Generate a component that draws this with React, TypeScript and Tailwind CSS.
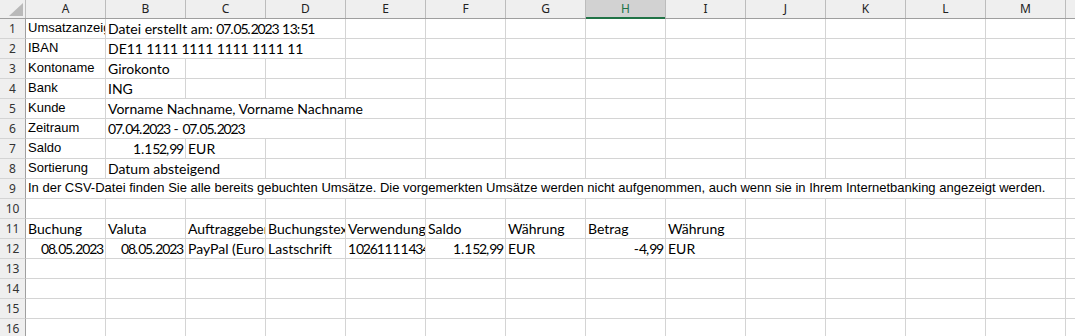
import React from "react";

type Cell = {
  c: number; // start column index 0..12
  span?: number;
  text: string;
  right?: boolean;
  font?: "arial" | "cal";
};

const W: Record<number, string> = {
  1: "w-[80px]",
  2: "w-[160px]",
  3: "w-[240px]",
  4: "w-[320px]",
  13: "w-[1040px]",
};

const cols = ["A", "B", "C", "D", "E", "F", "G", "H", "I", "J", "K", "L", "M"];

const rows: Cell[][] = [
  [
    { c: 0, text: "Umsatzanzeige", font: "arial" },
    { c: 1, span: 3, text: "Datei erstellt am: 07.05.2023 13:51", font: "cal" },
  ],
  [
    { c: 0, text: "IBAN", font: "arial" },
    { c: 1, span: 3, text: "DE11 1111 1111 1111 1111 11", font: "cal" },
  ],
  [
    { c: 0, text: "Kontoname", font: "arial" },
    { c: 1, text: "Girokonto", font: "cal" },
  ],
  [
    { c: 0, text: "Bank", font: "arial" },
    { c: 1, text: "ING", font: "cal" },
  ],
  [
    { c: 0, text: "Kunde", font: "arial" },
    { c: 1, span: 4, text: "Vorname Nachname, Vorname Nachname", font: "cal" },
  ],
  [
    { c: 0, text: "Zeitraum", font: "arial" },
    { c: 1, span: 3, text: "07.04.2023 - 07.05.2023", font: "cal" },
  ],
  [
    { c: 0, text: "Saldo", font: "arial" },
    { c: 1, text: "1.152,99", right: true, font: "cal" },
    { c: 2, text: "EUR", font: "cal" },
  ],
  [
    { c: 0, text: "Sortierung", font: "arial" },
    { c: 1, span: 2, text: "Datum absteigend", font: "cal" },
  ],
  [
    {
      c: 0,
      span: 13,
      text:
        "In der CSV-Datei finden Sie alle bereits gebuchten Umsätze. Die vorgemerkten Umsätze werden nicht aufgenommen, auch wenn sie in Ihrem Internetbanking angezeigt werden.",
      font: "arial",
    },
  ],
  [],
  [
    { c: 0, text: "Buchung", font: "cal" },
    { c: 1, text: "Valuta", font: "cal" },
    { c: 2, text: "Auftraggeber/Empfänger", font: "cal" },
    { c: 3, text: "Buchungstext", font: "cal" },
    { c: 4, text: "Verwendungszweck", font: "cal" },
    { c: 5, text: "Saldo", font: "cal" },
    { c: 6, text: "Währung", font: "cal" },
    { c: 7, text: "Betrag", font: "cal" },
    { c: 8, text: "Währung", font: "cal" },
  ],
  [
    { c: 0, text: "08.05.2023", right: true, font: "cal" },
    { c: 1, text: "08.05.2023", right: true, font: "cal" },
    { c: 2, text: "PayPal (Europe) S.a.r.l. et Cie., S.C.A.", font: "cal" },
    { c: 3, text: "Lastschrift", font: "cal" },
    { c: 4, text: "1026111143456 PP.1111.PP", font: "cal" },
    { c: 5, text: "1.152,99", right: true, font: "cal" },
    { c: 6, text: "EUR", font: "cal" },
    { c: 7, text: "-4,99", right: true, font: "cal" },
    { c: 8, text: "EUR", font: "cal" },
  ],
  [],
  [],
  [],
  [],
];

function CalText({ text }: { text: string }) {
  const parts = text.split(/([02-9]+|1+)/);
  return (
    <span>
      {parts.map((p, i) =>
        /^1+$/.test(p) ? (
          <span key={i} className="tracking-[-0.2px]">
            {p}
          </span>
        ) : /^[02-9]+$/.test(p) ? (
          <span key={i} className="tracking-[-1.2px]">
            {p}
          </span>
        ) : (
          <span key={i}>{p}</span>
        )
      )}
    </span>
  );
}

function buildRow(cells: Cell[]) {
  const out: React.ReactNode[] = [];
  let col = 0;
  const sorted = [...cells].sort((a, b) => a.c - b.c);
  let idx = 0;
  while (col < 13) {
    const cell = sorted[idx];
    if (cell && cell.c === col) {
      const span = cell.span ?? 1;
      const isArial = cell.font === "arial";
      const fontCls = isArial
        ? "font-['Liberation_Sans',Arial,sans-serif] text-[13px] pb-[2px]"
        : "font-['Lato',sans-serif] text-[14px] pb-[1px]";
      out.push(
        <div
          key={col}
          className={`${W[span]} h-[20px] shrink-0 border-r border-b border-[#d4d4d4] overflow-hidden whitespace-nowrap flex items-end px-[2px] leading-[16px] text-black ${
            cell.right ? "justify-end" : "justify-start"
          } ${fontCls}`}
        >
          {isArial ? <span>{cell.text}</span> : <CalText text={cell.text} />}
        </div>
      );
      col += span;
      idx++;
    } else {
      out.push(
        <div
          key={col}
          className="w-[80px] h-[20px] shrink-0 border-r border-b border-[#d4d4d4]"
        />
      );
      col++;
    }
  }
  out.push(
    <div key="rest" className="flex-1 h-[20px] border-b border-[#d4d4d4]" />
  );
  return out;
}

export default function App() {
  return (
    <div className="w-[1075px] h-[336px] overflow-hidden bg-white">
      {/* Column header */}
      <div className="flex h-[19px] bg-[#efefef] border-b border-[#9f9f9f] font-['Noto_Sans',sans-serif] text-[12px] text-[#222]">
        <div className="relative w-[26px] h-[18px] shrink-0 border-r border-[#bcbcbc]">
          <svg
            className="absolute left-[9px] top-[3px]"
            width="14"
            height="13"
            viewBox="0 0 14 13"
          >
            <polygon points="14,0 14,13 0,13" fill="#b9b9b9" />
          </svg>
        </div>
        {cols.map((c) =>
          c === "H" ? (
            <div
              key={c}
              className="w-[80px] h-[18px] shrink-0 border-r border-[#bcbcbc] bg-[#d2d2d2] text-[#217346] flex items-center justify-center leading-[16px] relative"
            >
              {c}
              <div className="absolute left-0 right-0 bottom-[-1px] h-[2px] bg-[#217346]" />
            </div>
          ) : (
            <div
              key={c}
              className="w-[80px] h-[18px] shrink-0 border-r border-[#bcbcbc] flex items-center justify-center leading-[16px]"
            >
              {c}
            </div>
          )
        )}
        <div className="flex-1" />
      </div>
      {rows.map((r, i) => (
        <div key={i} className="flex">
          <div className="w-[26px] h-[20px] shrink-0 bg-[#efefef] border-r border-[#9f9f9f] border-b border-b-[#d4d4d4] flex items-center justify-center font-['Noto_Sans',sans-serif] text-[12px] text-[#333] leading-[16px]">
            {i + 1}
          </div>
          {buildRow(r)}
        </div>
      ))}
    </div>
  );
}
